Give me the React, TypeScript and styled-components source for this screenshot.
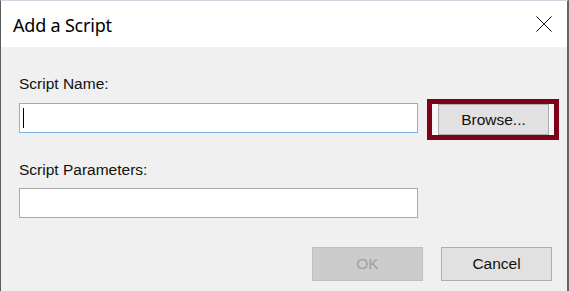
import styled, { createGlobalStyle } from "styled-components";

const GlobalStyle = createGlobalStyle`
  html, body {
    margin: 0;
    padding: 0;
    background: #f0f0f0;
  }
  * {
    box-sizing: border-box;
  }
`;

const Dialog = styled.div`
  width: 569px;
  height: 291px;
  display: flex;
  flex-direction: column;
  background: #f0f0f0;
  border-top: 1px solid #cdd6e1;
  border-left: 1px solid #5c5c5c;
  border-right: 2px solid #646464;
  font-family: "Liberation Sans", Arial, sans-serif;
  font-size: 15.5px;
  color: #111;
`;

const TitleBar = styled.div`
  height: 46px;
  flex-shrink: 0;
  background: #fff;
  display: flex;
  align-items: center;
  justify-content: space-between;
  padding: 0 15px 0 12px;
`;

const Title = styled.div`
  font-family: "Noto Sans", "Open Sans", sans-serif;
  font-size: 18px;
  letter-spacing: -0.2px;
  color: #000;
  margin-top: 1px;
`;

const CloseButton = styled.div`
  width: 16px;
  height: 16px;
  display: flex;
`;

const Body = styled.div`
  flex: 1;
  display: flex;
  flex-direction: column;
  padding: 28px 8px 10px 18px;
`;

const Label = styled.div<{ $top?: number }>`
  line-height: 18px;
  height: 18px;
  margin-top: ${(p) => p.$top ?? 0}px;
`;

const FieldRow = styled.div<{ $top: number }>`
  display: flex;
  align-items: flex-start;
  gap: 9px;
  margin-top: ${(p) => p.$top}px;
`;

const TextBox = styled.div<{ $focused?: boolean }>`
  flex-shrink: 0;
  width: 399px;
  height: 30px;
  background: #fff;
  border: 1px solid ${(p) => (p.$focused ? "#7eb4ea" : "#a9a9a9")};
  margin-top: ${(p) => (p.$focused ? 4 : 0)}px;
  display: flex;
  align-items: center;
  padding-left: 3px;
`;

const Caret = styled.span`
  width: 1px;
  height: 20px;
  background: #000;
`;

const Highlight = styled.div`
  flex-shrink: 0;
  width: 132px;
  height: 41px;
  border: 5px solid #7f0019;
  background: #f7f7f7;
  padding: 0 5px 0 6px;
  display: flex;
`;

const Button = styled.div<{ $disabled?: boolean; $fill?: boolean }>`
  width: ${(p) => (p.$fill ? "auto" : "111px")};
  flex: ${(p) => (p.$fill ? 1 : "none")};
  height: ${(p) => (p.$fill ? "100%" : "34px")};
  display: flex;
  align-items: center;
  justify-content: center;
  background: ${(p) => (p.$disabled ? "#cccccc" : "#e1e1e1")};
  border: 1px solid ${(p) => (p.$disabled ? "#bfbfbf" : "#adadad")};
  color: ${(p) => (p.$disabled ? "#a0a0a0" : "#111")};
`;

const Footer = styled.div`
  margin-top: 29px;
  padding-right: 7px;
  display: flex;
  justify-content: flex-end;
  gap: 18px;
`;

export default function App() {
  return (
    <>
      <GlobalStyle />
      <Dialog>
        <TitleBar>
          <Title>Add a Script</Title>
          <CloseButton>
            <svg width="16" height="16" viewBox="0 0 16 16">
              <path d="M0.5 0.5 L15.5 15.5 M15.5 0.5 L0.5 15.5" stroke="#111" strokeWidth="1" fill="none" />
            </svg>
          </CloseButton>
        </TitleBar>
        <Body>
          <Label>Script Name:</Label>
          <FieldRow $top={6}>
            <TextBox $focused>
              <Caret />
            </TextBox>
            <Highlight>
              <Button $fill>Browse...</Button>
            </Highlight>
          </FieldRow>
          <Label $top={21}>Script Parameters:</Label>
          <FieldRow $top={9}>
            <TextBox />
          </FieldRow>
          <Footer>
            <Button $disabled>OK</Button>
            <Button>Cancel</Button>
          </Footer>
        </Body>
      </Dialog>
    </>
  );
}
